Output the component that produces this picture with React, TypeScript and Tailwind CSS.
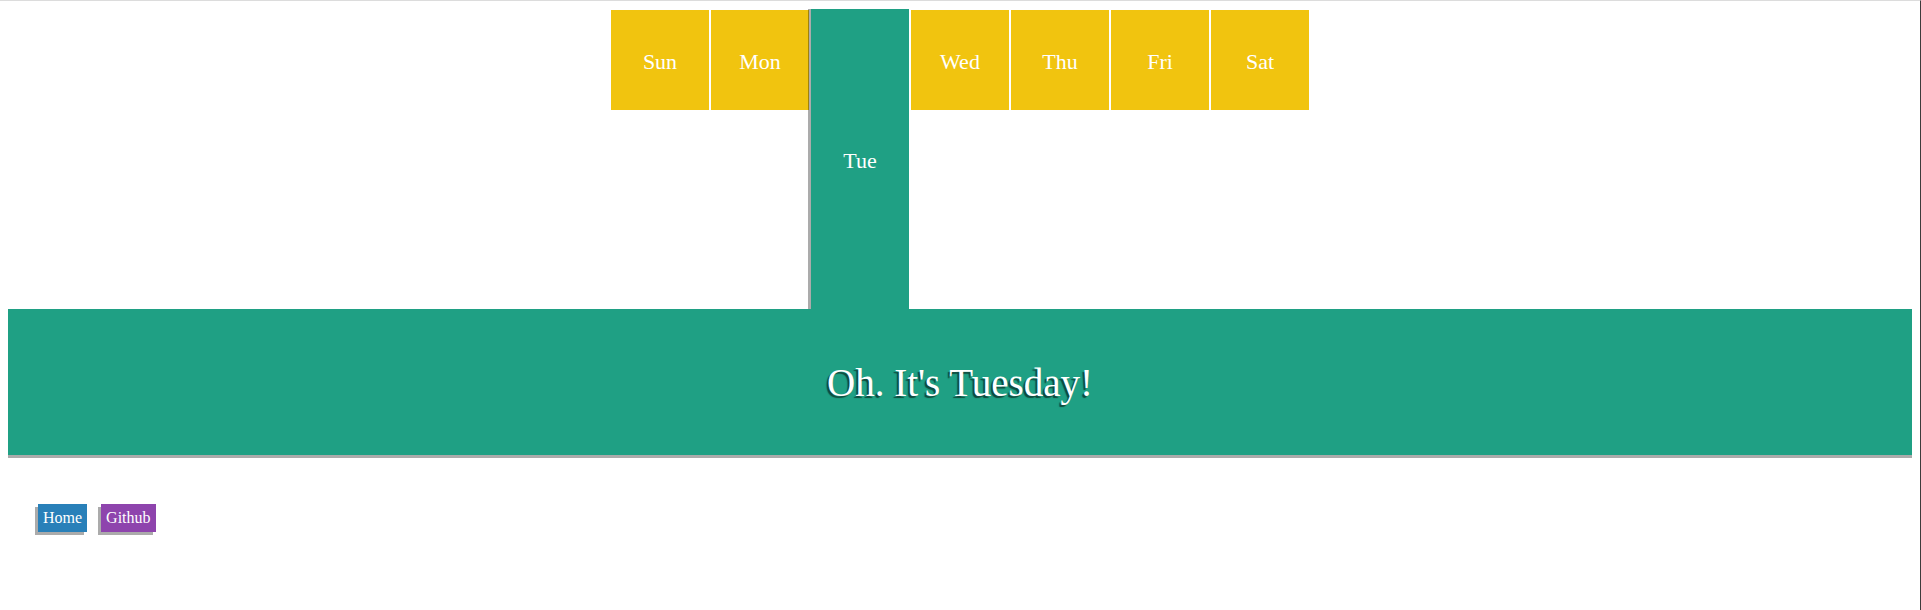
import React from 'react';

const days = ['Sun', 'Mon', 'Tue', 'Wed', 'Thu', 'Fri', 'Sat'];
const today = 'Tue';

function Day({ name }: { name: string }) {
  if (name === today) {
    return (
      <div className="relative z-10 mx-px flex h-[300px] w-[98px] items-center justify-center bg-[#1fa084] pt-[4px] shadow-[-3px_0_0_rgba(0,0,0,0.33)]">
        <span>{name}</span>
      </div>
    );
  }
  return (
    <div className="mx-px mt-px flex h-[100px] w-[98px] items-center justify-center bg-[#f1c40f] pt-[4px]">
      <span>{name}</span>
    </div>
  );
}

export default function App() {
  return (
    <div className="min-h-[610px] w-full border-t border-r border-t-[#dcdcdc] border-r-[#3c3c3c] p-2 font-['Liberation_Serif','Times_New_Roman',serif] text-white">
      <div className="flex items-start justify-center text-[22px] leading-none">
        {days.map((d) => (
          <Day key={d} name={d} />
        ))}
      </div>

      <div className="flex h-[146px] items-center justify-center bg-[#1fa084] shadow-[0_3px_0_rgba(0,0,0,0.33)]">
        <h1 className="text-[39px] leading-none [text-shadow:-2px_2px_1px_rgba(0,0,0,0.55)]">
          Oh. It's Tuesday!
        </h1>
      </div>

      <div className="mt-[49px] flex gap-[14px] pl-[30px] text-[16px] leading-[20px]">
        <a href="#" className="bg-[#2980b9] px-[5px] py-[4px] shadow-[-3px_3px_0_rgba(0,0,0,0.33)]">
          Home
        </a>
        <a href="#" className="bg-[#8e44ad] px-[5px] py-[4px] shadow-[-3px_3px_0_rgba(0,0,0,0.33)]">
          Github
        </a>
      </div>
    </div>
  );
}
